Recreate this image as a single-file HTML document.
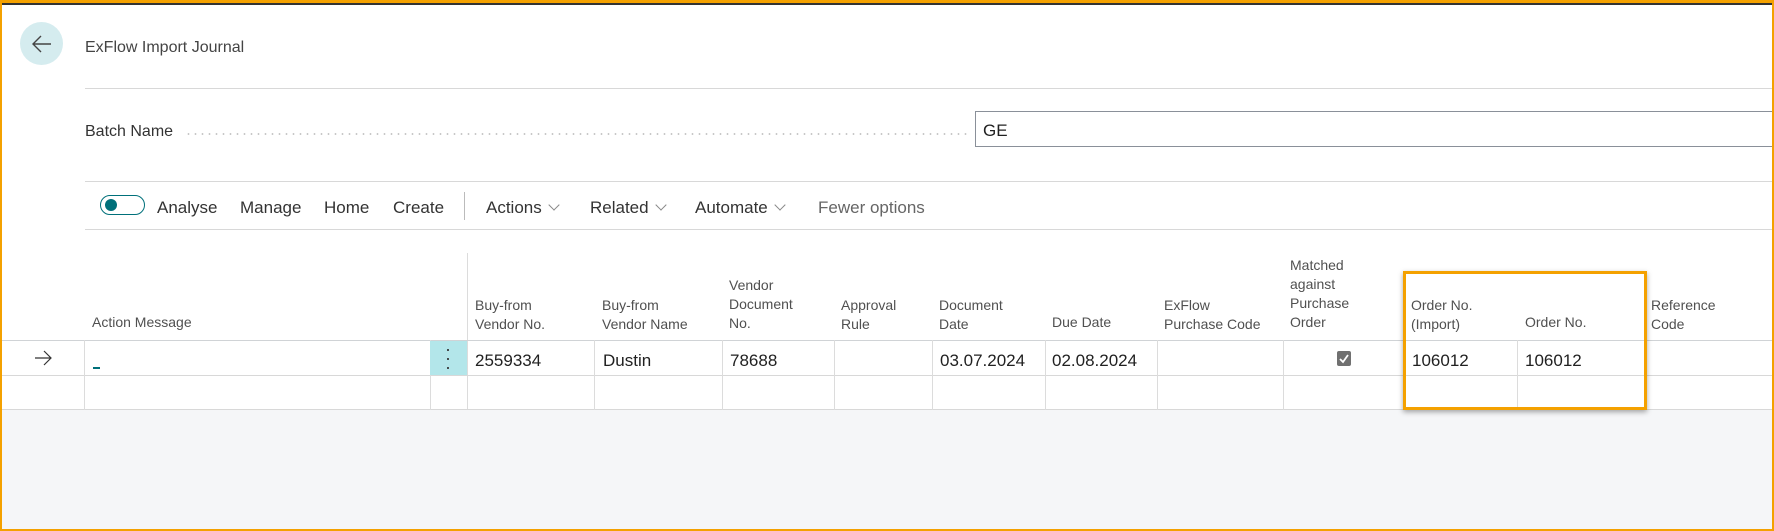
<!DOCTYPE html>
<html><head><meta charset="utf-8"><style>
*{margin:0;padding:0;box-sizing:border-box}
body{width:1774px;height:531px;overflow:hidden;background:#fff;font-family:"Liberation Sans",sans-serif;color:#212121;position:relative}
.frame{position:absolute;left:0;top:0;width:1774px;height:531px;border:2px solid #f4a100;border-top:3px solid #f4a100;pointer-events:none;z-index:10}
.topdark{position:absolute;left:0;top:3px;width:1774px;height:2px;background:#333;z-index:9}
.abs{position:absolute}
.hl{position:absolute;height:1px;background:#d8d8d8}
.t{position:absolute;white-space:nowrap}
.gray{background:#f5f6f8;position:absolute;left:0;top:410px;width:1774px;height:121px}
.vl{position:absolute;width:1px;background:#dcdcdc}
.h{position:absolute;font-size:14px;color:#505050;line-height:19px}
.c{position:absolute;font-size:17px;top:351px}
.menu{position:absolute;top:198px;font-size:17px;color:#333}
.chev{display:inline-block;width:8px;height:8px;border-right:1px solid #888;border-bottom:1px solid #888;transform:rotate(45deg);margin-left:8px;position:relative;top:-4px}
</style></head><body>
<div class="topdark"></div>
<div class="frame"></div>
<div class="abs" style="left:20px;top:22px;width:43px;height:43px;border-radius:50%;background:#d5ecef"></div>
<svg class="abs" style="left:30px;top:33px" width="24" height="22" viewBox="0 0 24 22"><path d="M21 11H3M11 3L3 11l8 8" fill="none" stroke="#444" stroke-width="1.4"/></svg>
<div class="t" style="left:85px;top:39px;font-size:16px;color:#444">ExFlow Import Journal</div>
<div class="hl" style="left:85px;top:88px;width:1689px"></div>
<div class="t" style="left:85px;top:123px;font-size:16px;color:#333">Batch Name</div>
<div class="abs" style="left:185px;top:133px;width:785px;height:2px;background-image:radial-gradient(circle,#c8c8c8 0.8px,transparent 1px);background-size:7px 2px"></div>
<div class="abs" style="left:975px;top:111px;width:800px;height:36px;border:1px solid #8a9099;border-right:none"></div>
<div class="t" style="left:983px;top:121px;font-size:17px">GE</div>
<div class="hl" style="left:85px;top:181px;width:1689px"></div>
<div class="abs" style="left:100px;top:195px;width:45px;height:20px;border:1.5px solid #00707a;border-radius:10px"></div>
<div class="abs" style="left:105px;top:199px;width:12px;height:12px;border-radius:50%;background:#00707a"></div>
<div class="menu" style="left:157px">Analyse</div>
<div class="menu" style="left:240px">Manage</div>
<div class="menu" style="left:324px">Home</div>
<div class="menu" style="left:393px">Create</div>
<div class="abs" style="left:464px;top:192px;width:1px;height:28px;background:#bbb"></div>
<div class="menu" style="left:486px">Actions<span class="chev"></span></div>
<div class="menu" style="left:590px">Related<span class="chev"></span></div>
<div class="menu" style="left:695px">Automate<span class="chev"></span></div>
<div class="menu" style="left:818px;color:#666">Fewer options</div>
<div class="hl" style="left:85px;top:229px;width:1689px"></div>

<div class="vl" style="left:467px;top:253px;height:157px"></div>
<div class="h" style="left:92px;top:313px">Action Message</div>
<div class="h" style="left:475px;top:296px">Buy-from<br>Vendor No.</div>
<div class="h" style="left:602px;top:296px">Buy-from<br>Vendor Name</div>
<div class="h" style="left:729px;top:276px">Vendor<br>Document<br>No.</div>
<div class="h" style="left:841px;top:296px">Approval<br>Rule</div>
<div class="h" style="left:939px;top:296px">Document<br>Date</div>
<div class="h" style="left:1052px;top:313px">Due Date</div>
<div class="h" style="left:1164px;top:296px">ExFlow<br>Purchase Code</div>
<div class="h" style="left:1290px;top:256px">Matched<br>against<br>Purchase<br>Order</div>
<div class="h" style="left:1411px;top:296px">Order No.<br>(Import)</div>
<div class="h" style="left:1525px;top:313px">Order No.</div>
<div class="h" style="left:1651px;top:296px">Reference<br>Code</div>

<div class="hl" style="left:0;top:340px;width:1774px;background:#d0d3d6"></div>
<div class="hl" style="left:0;top:375px;width:1774px;background:#d8d8d8"></div>
<div class="hl" style="left:0;top:409px;width:1774px;background:#d8d8d8"></div>
<div class="gray"></div>
<div class="vl" style="left:84px;top:340px;height:70px"></div>
<div class="vl" style="left:430px;top:340px;height:70px"></div>
<div class="vl" style="left:594px;top:340px;height:70px"></div>
<div class="vl" style="left:722px;top:340px;height:70px"></div>
<div class="vl" style="left:834px;top:340px;height:70px"></div>
<div class="vl" style="left:932px;top:340px;height:70px"></div>
<div class="vl" style="left:1045px;top:340px;height:70px"></div>
<div class="vl" style="left:1157px;top:340px;height:70px"></div>
<div class="vl" style="left:1283px;top:340px;height:70px"></div>
<div class="vl" style="left:1517px;top:340px;height:70px"></div>
<div class="abs" style="left:430px;top:341px;width:37px;height:34px;background:#b3e6ea"></div>
<div class="t" style="left:445px;top:345px;font-size:18px;color:#333;line-height:9px">·<br>·<br>·</div>
<svg class="abs" style="left:33px;top:350px" width="20" height="16" viewBox="0 0 20 16"><path d="M2 8h16M11 1l7 7-7 7" fill="none" stroke="#333" stroke-width="1.2"/></svg>
<div class="abs" style="left:93px;top:367px;width:7px;height:2px;background:#00707a"></div>
<div class="c" style="left:475px">2559334</div>
<div class="c" style="left:603px">Dustin</div>
<div class="c" style="left:730px">78688</div>
<div class="c" style="left:940px">03.07.2024</div>
<div class="c" style="left:1052px">02.08.2024</div>
<div class="abs" style="left:1337px;top:351px;width:14px;height:15px;background:#707070;border-radius:2px"></div>
<svg class="abs" style="left:1337px;top:351px" width="14" height="15"><path d="M3 8l3 3 5-7" fill="none" stroke="#fff" stroke-width="1.8"/></svg>
<div class="c" style="left:1412px">106012</div>
<div class="c" style="left:1525px">106012</div>
<div class="abs" style="left:1403px;top:271px;width:244px;height:139px;border:3px solid #f4a100;box-shadow:0 2px 5px rgba(0,0,0,.35)"></div>
</body></html>
